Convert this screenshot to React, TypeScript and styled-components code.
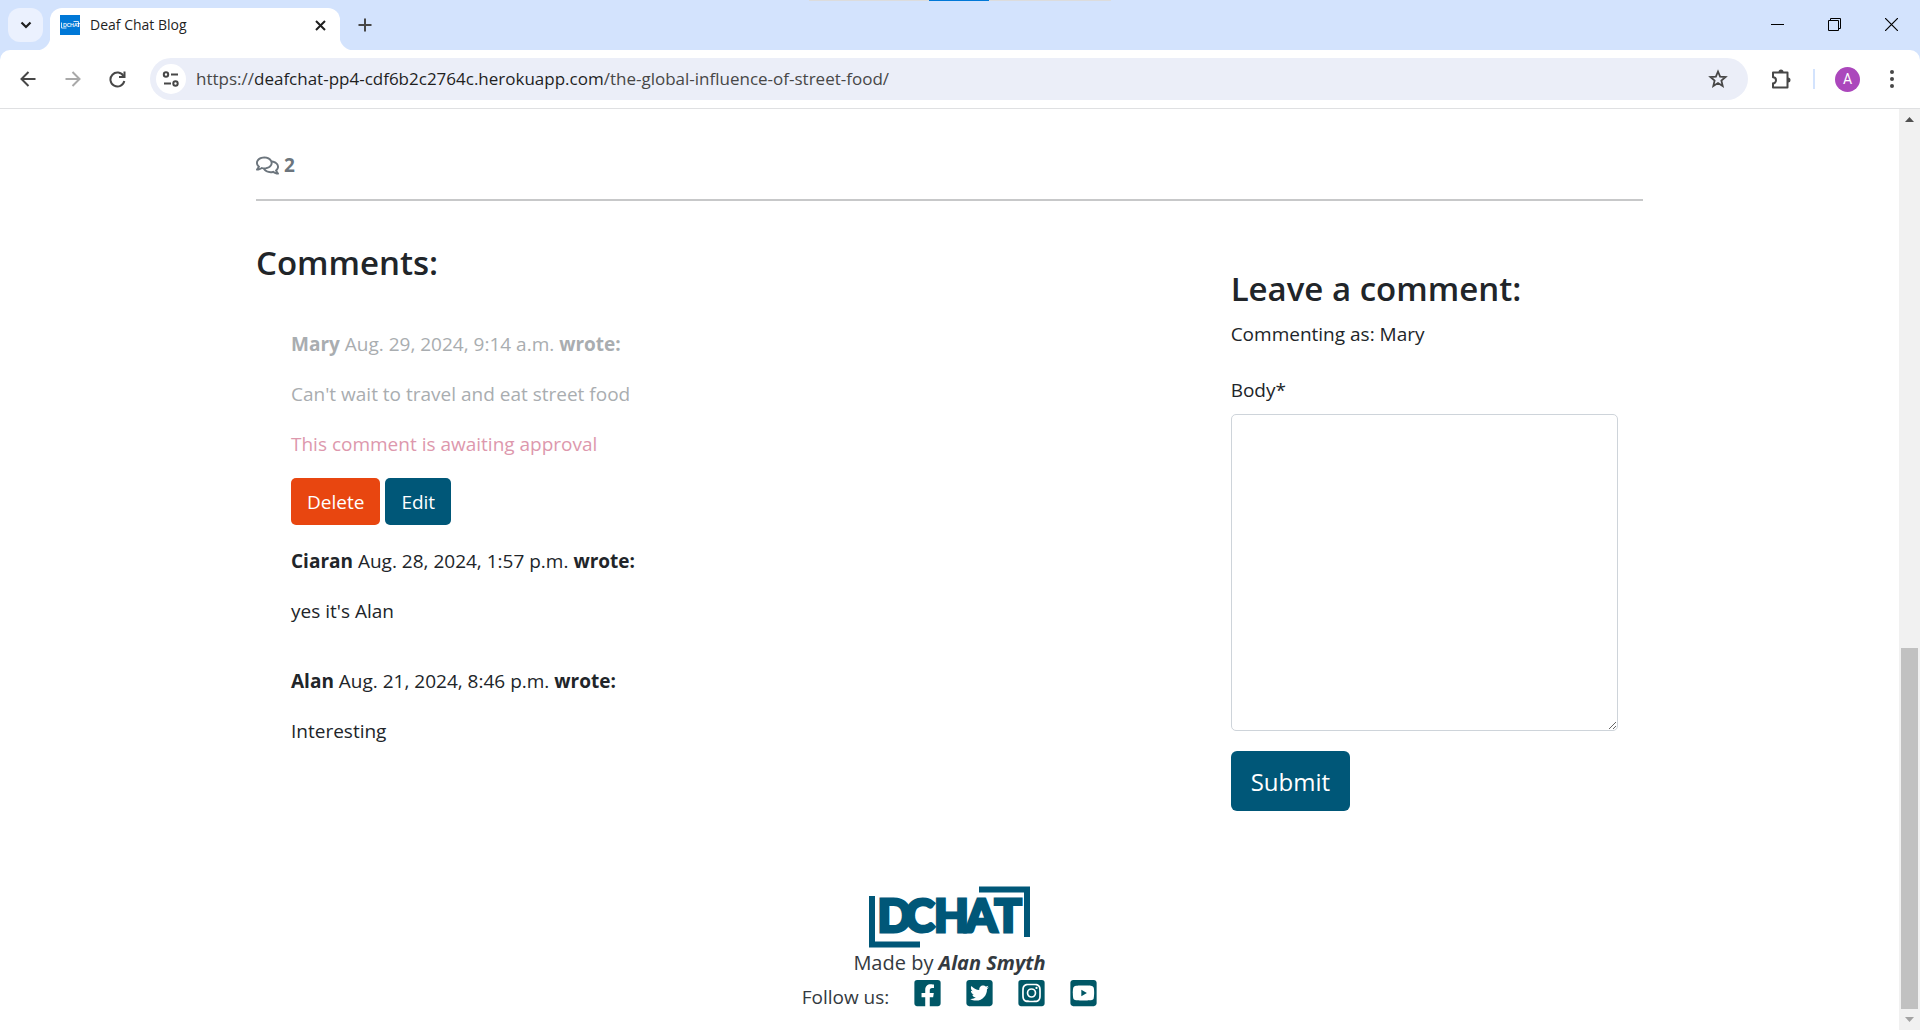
import React from "react";
import styled, { createGlobalStyle, css } from "styled-components";
import {
  FaFacebookSquare,
  FaTwitterSquare,
  FaInstagramSquare,
  FaYoutubeSquare,
  FaRegComments,
} from "react-icons/fa";

const teal = "#005778";
const ink = "#212529";

const GlobalStyle = createGlobalStyle`
  *, *::before, *::after { box-sizing: border-box; }
  body {
    margin: 0;
    background: #fff;
    color: ${ink};
    font-family: "Open Sans", "Noto Sans", sans-serif;
    font-size: 19px;
    line-height: 32px;
  }
  button, input, textarea { font-family: inherit; }
`;

const Window = styled.div`
  min-height: 100vh;
  display: flex;
  flex-direction: column;
`;

/* ---------- browser frame ---------- */

const TabStrip = styled.header`
  position: relative;
  display: flex;
  align-items: flex-start;
  height: 50px;
  padding: 8px 0 0 8px;
  background: #d3e3fd;
`;

const DragHint = styled.div`
  position: absolute;
  top: 0;
  left: 50%;
  width: 302px;
  height: 1px;
  transform: translateX(-50%);
  background: linear-gradient(90deg, #dcdcdc 120px, #0078d7 120px, #0078d7 180px, #dcdcdc 180px);
`;

const PlainButton = styled.button`
  display: flex;
  align-items: center;
  justify-content: center;
  flex: none;
  padding: 0;
  border: 0;
  background: transparent;
  color: #474747;
  cursor: pointer;
`;

const TabSearch = styled(PlainButton)`
  width: 35px;
  height: 34px;
  border-radius: 12px;
  background: #ebf1fe;
  color: #1f1f1f;
`;

const Tab = styled.div`
  position: relative;
  display: flex;
  align-items: center;
  width: 290px;
  height: 42px;
  margin-left: 7px;
  padding: 0 10px 8px;
  border-radius: 12px 12px 0 0;
  background: #fff;

  &::before,
  &::after {
    content: "";
    position: absolute;
    bottom: 0;
    width: 14px;
    height: 14px;
  }
  &::before {
    right: 100%;
    background: radial-gradient(circle at 0 0, transparent 14px, #fff 15px);
  }
  &::after {
    left: 100%;
    background: radial-gradient(circle at 100% 0, transparent 14px, #fff 15px);
  }
`;

const TabTitle = styled.span`
  flex: 1;
  margin-left: 10px;
  font-size: 14px;
  line-height: 20px;
  color: #1f1f1f;
`;

const TabClose = styled(PlainButton)`
  width: 20px;
  height: 20px;
  color: #1f1f1f;
`;

const NewTab = styled(PlainButton)`
  width: 34px;
  height: 34px;
  margin-left: 8px;
`;

const WindowControls = styled.div`
  display: flex;
  margin: -8px 0 0 auto;
`;

const WindowButton = styled(PlainButton)`
  width: 57px;
  height: 49px;
  color: #000;
`;

const ToolbarBack = styled.div`
  background: #d3e3fd;
`;

const Toolbar = styled.div`
  display: flex;
  align-items: center;
  height: 59px;
  padding: 0 6px 0 5px;
  border-bottom: 1px solid #dfe0e2;
  border-radius: 10px 10px 0 0;
  background: #fff;
`;

const ToolButton = styled(PlainButton)<{ $faded?: boolean }>`
  width: 45px;
  height: 42px;
  color: ${(p) => (p.$faded ? "#a9a9a9" : "#474747")};
`;

const AddressBar = styled.div`
  display: flex;
  align-items: center;
  flex: 1;
  height: 42px;
  margin: 0 10px;
  padding: 0 14px 0 6px;
  border-radius: 21px;
  background: #ebeef8;
`;

const SiteInfo = styled(PlainButton)`
  width: 30px;
  height: 30px;
  border-radius: 50%;
  background: #fff;
`;

const Address = styled.div`
  flex: 1;
  margin-left: 10px;
  font-size: 17px;
  line-height: 24px;
  color: #474747;
  white-space: nowrap;
`;

const Host = styled.span`
  color: #1f1f1f;
`;

const StarButton = styled(PlainButton)`
  width: 32px;
  height: 32px;
`;

const Divider = styled.div`
  width: 2px;
  height: 20px;
  margin: 0 20px 0 10px;
  background: #d3e3fd;
`;

const Avatar = styled(PlainButton)`
  width: 25px;
  height: 25px;
  margin-right: 9px;
  border-radius: 50%;
  background: #ab47bc;
  color: #fff;
  font-family: Roboto, sans-serif;
  font-size: 14px;
`;

/* ---------- scrolled page ---------- */

const Viewport = styled.div`
  display: grid;
  grid-template-columns: minmax(0, 1fr) 21px;
  flex: 1;
`;

const ScrollRail = styled.div`
  display: flex;
  flex-direction: column;
  padding: 0 2px;
  background: #f1f1f1;
`;

const ScrollArrow = styled.div<{ $dim?: boolean }>`
  display: flex;
  align-items: center;
  justify-content: center;
  height: 21px;
  color: ${(p) => (p.$dim ? "#a3a3a3" : "#505050")};
`;

const ScrollGap = styled.div`
  flex: 518;
`;

const ScrollThumb = styled.div`
  flex: 361;
  background: #c1c1c1;
`;

const Page = styled.main`
  width: 100%;
  max-width: 1427px;
  margin: 0 auto;
  padding: 40px 20px 0;
`;

const CommentCount = styled.div`
  display: flex;
  align-items: center;
  gap: 5px;
  padding-bottom: 18px;
  border-bottom: 2px solid #c7c8c9;
  color: #6c757d;
  font-weight: 700;
`;

const Columns = styled.div`
  display: grid;
  grid-template-columns: 2fr 1fr;
  padding-top: 39px;
`;

const Heading = styled.h3`
  margin: 0 0 6px;
  font-size: 33px;
  font-weight: 600;
  line-height: 46px;
`;

const CommentList = styled.section`
  padding: 36px 35px 0;
`;

const Comment = styled.article<{ $pending?: boolean }>`
  margin-bottom: 38px;
  p {
    margin: 0 0 18px;
  }
  ${(p) =>
    p.$pending &&
    css`
      margin-bottom: 20px;
      color: #a9adb0;
    `}
`;

const Awaiting = styled.p`
  color: #dd98ad;
`;

const Actions = styled.div`
  display: flex;
  gap: 5px;
`;

const Button = styled.button<{ $tone?: string; $large?: boolean }>`
  padding: ${(p) => (p.$large ? "11px 20px 9px" : "9px 16px 7px")};
  border: 0;
  border-radius: ${(p) => (p.$large ? 6 : 5)}px;
  background: ${(p) => p.$tone || teal};
  color: #fff;
  font-size: ${(p) => (p.$large ? 24 : 19)}px;
  line-height: ${(p) => (p.$large ? 40 : 31)}px;
  cursor: pointer;
`;

const FormCard = styled.form`
  padding: 26px 25px 0 50px;
`;

const Label = styled.label`
  display: block;
  margin: 24px 0 8px;
`;

const TextArea = styled.textarea`
  display: block;
  width: 100%;
  height: 317px;
  margin-bottom: 20px;
  padding: 8px 15px;
  border: 1px solid #ced4da;
  border-radius: 5px;
  background: #fff;
  font-size: 19px;
  line-height: 30px;
  resize: vertical;
`;

const Footer = styled.footer`
  display: flex;
  flex-direction: column;
  align-items: center;
  padding: 75px 0 16px;
  color: #343a40;
  line-height: 30px;
`;

const Credit = styled.div`
  font-size: 20px;
`;

const Follow = styled.div`
  display: flex;
  align-items: flex-start;
  gap: 25px;
  a {
    display: block;
    height: 30px;
    color: #005766;
  }
`;

const FollowLabel = styled.span`
  padding-top: 4px;
`;

const SocialIcon = styled.span`
  display: block;
  width: 27px;
  height: 30px;
  svg {
    display: block;
    width: 27px;
    height: 30px;
  }
`;

const Author = styled.strong`
  font-style: italic;
  font-weight: 700;
`;

/* Corner brackets around the DCHAT word mark */
function Logo() {
  return (
    <svg width="162" height="62" viewBox="0 0 162 62" role="img" aria-label="DCHAT">
      <path d="M3 10V58.5H51" fill="none" stroke={teal} strokeWidth="6" />
      <path d="M110 3.5H158V51" fill="none" stroke={teal} strokeWidth="6" />
      <text
        y="45.5"
        x="8.5 36 65 96.500 125.500"
        fill={teal}
        stroke={teal}
        strokeWidth="3"
        fontFamily="Lato"
        fontWeight="900"
        fontSize="45"
      >
        DCHAT
      </text>
    </svg>
  );
}

function Favicon() {
  return (
    <svg width="20" height="20" viewBox="0 0 20 20" aria-hidden="true">
      <rect width="20" height="20" fill="#0078d7" />
      <path d="M1.500 7.500v5.500h5M13.500 6.500h5v5.500" fill="none" stroke="#cfe5f8" />
      <text x="3" y="12" fill="#fff" fontFamily="Lato" fontWeight="700" fontSize="5">
        DCHAT
      </text>
    </svg>
  );
}

const line = { fill: "none", stroke: "currentColor", strokeWidth: 2 } as const;

const socials = [
  { name: "Facebook", Icon: FaFacebookSquare },
  { name: "Twitter", Icon: FaTwitterSquare },
  { name: "Instagram", Icon: FaInstagramSquare },
  { name: "YouTube", Icon: FaYoutubeSquare },
];

function BrowserFrame() {
  return (
    <>
      <TabStrip>
        <DragHint />
        <TabSearch aria-label="Search tabs">
          <svg width="12" height="8" viewBox="0 0 12 8"><path d="M1.500 1.500L6 6l4.500-4.500" {...line} strokeWidth="2.200" /></svg>
        </TabSearch>
        <Tab>
          <Favicon />
          <TabTitle>Deaf Chat Blog</TabTitle>
          <TabClose aria-label="Close tab">
            <svg width="11" height="11" viewBox="0 0 11 11"><path d="M1 1l9 9M10 1l-9 9" {...line} /></svg>
          </TabClose>
        </Tab>
        <NewTab aria-label="New tab">
          <svg width="14" height="14" viewBox="0 0 14 14"><path d="M7 .5v13M.5 7h13" {...line} /></svg>
        </NewTab>
        <WindowControls>
          <WindowButton aria-label="Minimize">
            <svg width="13" height="13" viewBox="0 0 13 13"><path d="M0 6.500h13" {...line} strokeWidth="1" /></svg>
          </WindowButton>
          <WindowButton aria-label="Restore">
            <svg width="13" height="13" viewBox="0 0 13 13"><path d="M.5 2.500h10v10h-10zM2.500 2.500v-2h10v10h-2" {...line} strokeWidth="1" /></svg>
          </WindowButton>
          <WindowButton aria-label="Close">
            <svg width="13" height="13" viewBox="0 0 13 13"><path d="M0 0l13 13M13 0L0 13" {...line} strokeWidth="1.200" /></svg>
          </WindowButton>
        </WindowControls>
      </TabStrip>
      <ToolbarBack>
        <Toolbar>
          <ToolButton aria-label="Back">
            <svg width="16" height="16" viewBox="0 0 16 16"><path d="M15.500 8H2M8.500 1L1.500 8l7 7" {...line} /></svg>
          </ToolButton>
          <ToolButton aria-label="Forward" $faded>
            <svg width="16" height="16" viewBox="0 0 16 16"><path d="M.5 8H14M7.500 1l7 7-7 7" {...line} /></svg>
          </ToolButton>
          <ToolButton aria-label="Reload">
            <svg width="17" height="17" viewBox="0 0 17 17">
              <path d="M14.500 5A7 7 0 1 0 15.300 10" {...line} />
              <path d="M15.500 .5V6H10" {...line} />
            </svg>
          </ToolButton>
          <AddressBar>
            <SiteInfo aria-label="View site information">
              <svg width="18" height="16" viewBox="0 0 18 16">
                <circle cx="4" cy="3.500" r="2.200" {...line} />
                <path d="M9 3.500h7M2 12.500h7" {...line} />
                <circle cx="13.500" cy="12.500" r="2.200" {...line} />
              </svg>
            </SiteInfo>
            <Address>
              https://<Host>deafchat-pp4-cdf6b2c2764c.herokuapp.com</Host>/the-global-influence-of-street-food/
            </Address>
            <StarButton aria-label="Bookmark this tab">
              <svg width="20" height="20" viewBox="0 0 20 20">
                <path d="M10 2.500l2.100 5.100 5.500.4-4.200 3.600 1.300 5.400L10 14.100 5.300 17l1.300-5.400L2.400 8l5.500-.4z" {...line} strokeWidth="1.800" />
              </svg>
            </StarButton>
          </AddressBar>
          <ToolButton aria-label="Extensions">
            <svg width="22" height="22" viewBox="0 0 22 22">
              <path d="M3 4.500h14.500v15H3v-4.200a3 3 0 0 0 0-6z" {...line} strokeLinejoin="round" />
              <path d="M8.500 4a2.500 2.500 0 0 1 5 0zM18 9.500a2.500 2.500 0 0 1 0 5z" fill="currentColor" />
            </svg>
          </ToolButton>
          <Divider />
          <Avatar aria-label="Profile A">A</Avatar>
          <ToolButton aria-label="Menu">
            <svg width="4" height="18" viewBox="0 0 4 18" fill="currentColor">
              <circle cx="2" cy="2" r="2" /><circle cx="2" cy="9" r="2" /><circle cx="2" cy="16" r="2" />
            </svg>
          </ToolButton>
        </Toolbar>
      </ToolbarBack>
    </>
  );
}

export default function App() {
  return (
    <Window>
      <GlobalStyle />
      <BrowserFrame />
      <Viewport>
        <div>
          <Page>
            <CommentCount>
              <FaRegComments size={23} />
              <span>2</span>
            </CommentCount>
            <Columns>
              <div>
                <Heading>Comments:</Heading>
                <CommentList>
                  <Comment $pending>
                    <p><strong>Mary</strong> Aug. 29, 2024, 9:14 a.m. <strong>wrote:</strong></p>
                    <p>Can't wait to travel and eat street food</p>
                    <Awaiting>This comment is awaiting approval</Awaiting>
                    <Actions>
                      <Button type="button" $tone="#e84610">Delete</Button>
                      <Button type="button">Edit</Button>
                    </Actions>
                  </Comment>
                  <Comment>
                    <p><strong>Ciaran</strong> Aug. 28, 2024, 1:57 p.m. <strong>wrote:</strong></p>
                    <p>yes it's Alan</p>
                  </Comment>
                  <Comment>
                    <p><strong>Alan</strong> Aug. 21, 2024, 8:46 p.m. <strong>wrote:</strong></p>
                    <p>Interesting</p>
                  </Comment>
                </CommentList>
              </div>
              <FormCard onSubmit={(e) => e.preventDefault()}>
                <Heading>Leave a comment:</Heading>
                <div>Commenting as: Mary</div>
                <Label htmlFor="body">Body*</Label>
                <TextArea id="body" required />
                <Button type="submit" $large>Submit</Button>
              </FormCard>
            </Columns>
          </Page>
          <Footer>
            <Logo />
            <Credit>Made by <Author>Alan Smyth</Author></Credit>
            <Follow>
              <FollowLabel>Follow us:</FollowLabel>
              {socials.map(({ name, Icon }) => (
                <a key={name} href="#" aria-label={name}>
                  <SocialIcon><Icon /></SocialIcon>
                </a>
              ))}
            </Follow>
          </Footer>
        </div>
        <ScrollRail>
          <ScrollArrow>
            <svg width="9" height="5" viewBox="0 0 9 5"><path d="M4.500 0L9 5H0z" fill="currentColor" /></svg>
          </ScrollArrow>
          <ScrollGap />
          <ScrollThumb />
          <ScrollArrow $dim>
            <svg width="9" height="5" viewBox="0 0 9 5"><path d="M4.500 5L9 0H0z" fill="currentColor" /></svg>
          </ScrollArrow>
        </ScrollRail>
      </Viewport>
    </Window>
  );
}
